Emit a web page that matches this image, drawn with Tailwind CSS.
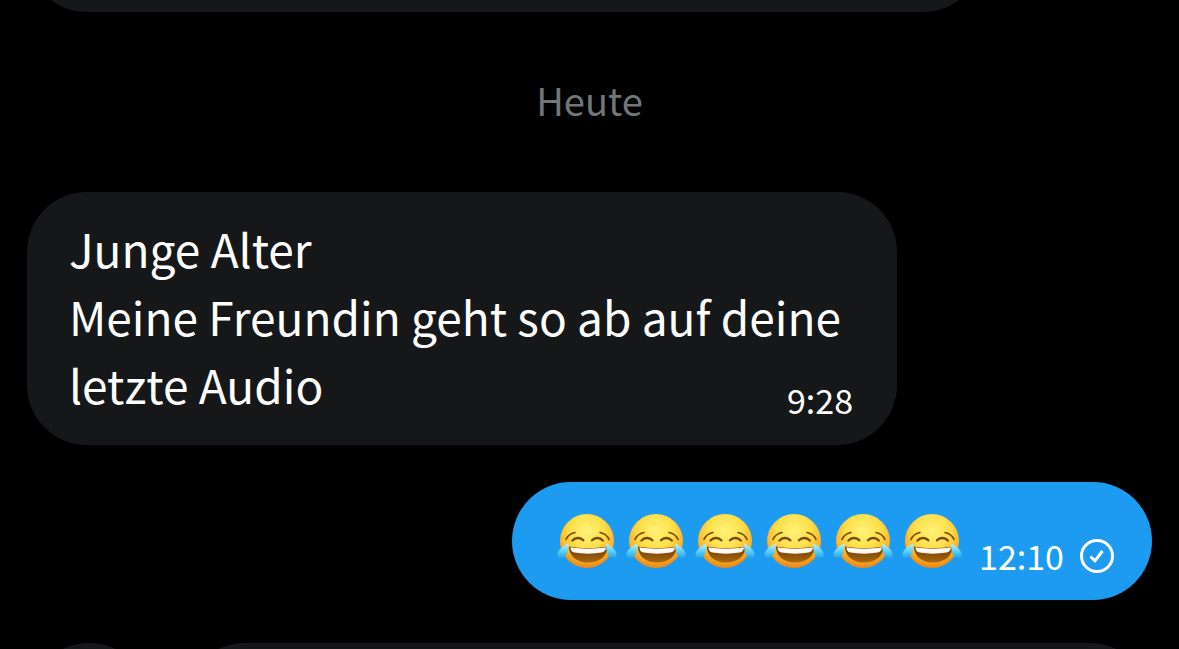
<!DOCTYPE html>
<html lang="de">
<head>
    <meta charset="UTF-8">
    <meta name="viewport" content="width=device-width, initial-scale=1.0">
    <title>Nachrichten</title>
    <script src="https://cdn.jsdelivr.net/npm/@tailwindcss/browser@4"></script>
</head>
<body class="bg-black text-white font-['Noto_Sans_CJK_SC',sans-serif]">
    <!-- Emoji symbol -->
    <svg class="absolute size-0" aria-hidden="true">
        <defs>
            <radialGradient id="face" cx="50%" cy="32%" r="70%">
                <stop offset="0" stop-color="#fff27a"/>
                <stop offset="0.45" stop-color="#fee04a"/>
                <stop offset="0.72" stop-color="#fbb92c"/>
                <stop offset="1" stop-color="#ec7d10"/>
            </radialGradient>
            <linearGradient id="mouth" x1="0" y1="0" x2="0" y2="1">
                <stop offset="0" stop-color="#6b3a08"/>
                <stop offset="1" stop-color="#a9680e"/>
            </linearGradient>
            <linearGradient id="tear" x1="0" y1="0" x2="0" y2="1">
                <stop offset="0" stop-color="#c3f1fd"/>
                <stop offset="0.5" stop-color="#62d2f7"/>
                <stop offset="1" stop-color="#1fa5ec"/>
            </linearGradient>
            <symbol id="joy" viewBox="0 0 60 56">
                <circle cx="30" cy="28" r="27" fill="url(#face)"/>
                <path d="M12 33.500c6 1.200 12 1.700 19 1.700s13-.5 19.500-1.700c0 9-7.500 16-19.500 16S12 42.500 12 33.500z" fill="url(#mouth)"/>
                <path d="M13.500 34.300c6 1 11.500 1.400 17.500 1.400s12-.4 18-1.400c-.3 3.500-2 4.900-4.500 5.300-8.500 1.400-18.500 1.400-27 0-2.500-.4-4-2-4-5.300z" fill="#fffaf4"/>
                <g fill="none" stroke="#7b480c" stroke-linecap="round">
                    <path d="M9 26.500c1.500-3.800 4.500-6 9-7M52 26.500c-1.500-3.800-4.500-6-9-7" stroke-width="1.600"/>
                    <path d="M15.500 27.500c2.800-3 7.800-3.500 10.800-.2M35 27.300c3-3.300 8-2.800 10.800.2" stroke-width="2.400"/>
                </g>
                <path d="M11.300 30.500C6 33 1 37 .5 41c-.4 4 5 5.500 8 2 2.200-2.800 3.200-7.500 2.800-12.500z" fill="url(#tear)"/>
                <path d="M49.200 30.500C54.500 33 59 37 59.500 41c.4 4-4.500 5.500-7.500 2-2.200-2.800-3.200-7.500-2.800-12.500z" fill="url(#tear)"/>
            </symbol>
        </defs>
    </svg>

    <div class="h-screen flex flex-col overflow-hidden">
        <!-- Conversation -->
        <main class="shrink-0 flex flex-col px-[27px]">
            <div class="-mt-[108px] h-30 w-[956px] max-w-full rounded-[60px] bg-[#161719]"></div>

            <h2 class="h-[180px] flex items-center justify-center pb-1 text-[38px] leading-[60px] text-[#71767b]">Heute</h2>

            <!-- Received -->
            <article class="self-start w-[870px] max-w-full flex items-end rounded-[60px] bg-[#161719] pl-[42px] pr-11 pt-[22px] pb-[27px]">
                <p class="flex-1 text-[46px] leading-[68px]">Junge Alter<br>Meine Freundin geht so ab auf deine<br>letzte Audio</p>
                <time class="-ml-24 text-[34px] leading-9">9:28</time>
            </article>

            <!-- Sent -->
            <article class="self-end mt-[37px] h-[118px] flex items-center rounded-full bg-[#1d9bf0] pl-[45px] pr-[38px]">
                <div class="flex gap-[9px]" role="img" aria-label="😂😂😂😂😂😂">
                    <svg class="w-15 h-14"><use href="#joy"/></svg>
                    <svg class="w-15 h-14"><use href="#joy"/></svg>
                    <svg class="w-15 h-14"><use href="#joy"/></svg>
                    <svg class="w-15 h-14"><use href="#joy"/></svg>
                    <svg class="w-15 h-14"><use href="#joy"/></svg>
                    <svg class="w-15 h-14"><use href="#joy"/></svg>
                </div>
                <div class="ml-[17px] mt-[30px] flex items-center gap-4">
                    <time class="text-[34px] leading-9">12:10</time>
                    <svg class="size-[34px]" viewBox="0 0 34 34" fill="none" stroke="#fff">
                        <circle cx="17" cy="17" r="15.500" stroke-width="3"/>
                        <path d="M10.500 17.500l4.500 4.300 7.500-9.800" stroke-width="3"/>
                    </svg>
                </div>
            </article>
        </main>

        <!-- Composer -->
        <form class="shrink-0 mt-[43px] flex gap-9 px-[29px]">
            <button type="button" aria-label="Anhang" class="size-30 shrink-0 rounded-full bg-[#161719]"></button>
            <input type="text" aria-label="Nachricht" class="h-30 min-w-0 flex-1 rounded-full bg-[#161719] px-10 text-[46px] outline-none">
        </form>
    </div>
</body>
</html>
